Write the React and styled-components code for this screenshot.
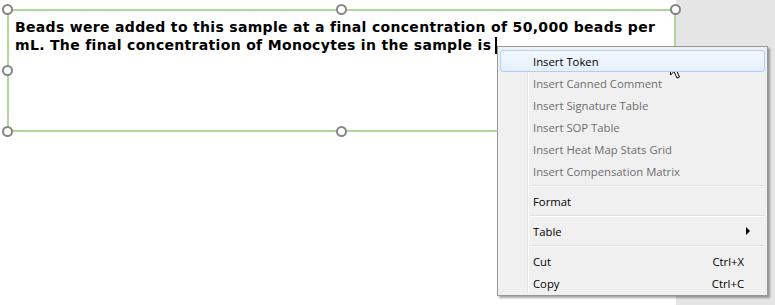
import React from "react";
import styled, { createGlobalStyle } from "styled-components";

const Global = createGlobalStyle`
  html, body {
    margin: 0;
    padding: 0;
    background: #ffffff;
  }
`;

const Page = styled.div`
  position: relative;
  display: flex;
  width: 775px;
  height: 305px;
  overflow: hidden;
`;

const Canvas = styled.div`
  flex: 0 0 673px;
  background: #ffffff;
  padding: 9px 0 0 7px;
  box-sizing: border-box;
`;

const SidePanel = styled.div`
  flex: 1;
  background: #e5e5e5;
`;

const TextBox = styled.div`
  position: relative;
  width: 669px;
  height: 123px;
  box-sizing: border-box;
  border: 2px solid #b0d69c;
  padding: 7px 6px 0 6px;
  font-family: "DejaVu Sans", Verdana, sans-serif;
  font-weight: bold;
  font-size: 14px;
  letter-spacing: 0.32px;
  line-height: 18px;
  color: #000;
`;

const Caret = styled.span`
  display: inline-block;
  width: 2px;
  height: 17px;
  background: #000;
  vertical-align: -4px;
  margin-left: 4px;
`;

// overlay that puts the resize handles on the frame's edges
const HandleFrame = styled.div`
  position: absolute;
  inset: -7px;
  display: flex;
  flex-direction: column;
  justify-content: space-between;
  pointer-events: none;
`;

const HandleRow = styled.div`
  display: flex;
  justify-content: space-between;
`;

const Handle = styled.span`
  width: 7px;
  height: 7px;
  border: 2px solid #858585;
  border-radius: 50%;
  background: #fff;
  visibility: ${(p) => (p.$hidden ? "hidden" : "visible")};
`;

const Menu = styled.div`
  position: absolute;
  left: 497px;
  top: 46px;
  width: 271px;
  box-sizing: border-box;
  background: #f0f0f0;
  border: 1px solid #979797;
  box-shadow: 2px 2px 2px rgba(0, 0, 0, 0.35);
  padding: 3px 2px 1px 2px;
  font-family: "Open Sans", "Noto Sans", sans-serif;
  font-size: 11.3px;
  &::before {
    content: "";
    position: absolute;
    left: 29px;
    top: 2px;
    bottom: 2px;
    width: 1px;
    background: #e2e3e3;
    border-right: 1px solid #ffffff;
  }
`;

const Item = styled.div`
  position: relative;
  display: flex;
  align-items: center;
  height: 22px;
  box-sizing: border-box;
  padding: 0 20px 0 32px;
  color: ${(p) => (p.$disabled ? "#6d6d6d" : "#000")};
  border: 1px solid ${(p) => (p.$hot ? "#a8d2f5" : "transparent")};
  border-radius: 3px;
  background: ${(p) =>
    p.$hot ? "linear-gradient(#f3f8fe, #e5eefa)" : "transparent"};
  z-index: 1;
`;

const Label = styled.span`
  flex: 1;
`;

const Shortcut = styled.span`
  color: #000;
`;

const Arrow = styled.span`
  width: 0;
  height: 0;
  border-top: 4px solid transparent;
  border-bottom: 4px solid transparent;
  border-left: 4px solid #000;
  margin-right: -6px;
`;

const Separator = styled.div`
  height: 8px;
  display: flex;
  align-items: center;
  padding-left: 30px;
  &::after {
    content: "";
    flex: 1;
    height: 1px;
    background: #e0e0e0;
    border-bottom: 1px solid #ffffff;
  }
`;

const Pointer = styled.svg`
  position: absolute;
  left: 669px;
  top: 58px;
`;

const items = [
  { label: "Insert Token", hot: true },
  { label: "Insert Canned Comment", disabled: true },
  { label: "Insert Signature Table", disabled: true },
  { label: "Insert SOP Table", disabled: true },
  { label: "Insert Heat Map Stats Grid", disabled: true },
  { label: "Insert Compensation Matrix", disabled: true },
  { sep: true },
  { label: "Format" },
  { sep: true },
  { label: "Table", sub: true },
  { sep: true },
  { label: "Cut", key: "Ctrl+X" },
  { label: "Copy", key: "Ctrl+C" },
];

export default function App() {
  return (
    <Page>
      <Global />
      <Canvas>
        <TextBox>
          Beads were added to this sample at a final concentration of 50,000
          beads per mL. The final concentration of Monocytes in the sample is
          <Caret />
          <HandleFrame>
            <HandleRow>
              <Handle />
              <Handle />
              <Handle />
            </HandleRow>
            <HandleRow>
              <Handle />
              <Handle $hidden />
            </HandleRow>
            <HandleRow>
              <Handle />
              <Handle />
              <Handle $hidden />
            </HandleRow>
          </HandleFrame>
        </TextBox>
      </Canvas>
      <SidePanel />
      <Menu>
        {items.map((it, i) =>
          it.sep ? (
            <Separator key={i} />
          ) : (
            <Item key={i} $hot={it.hot} $disabled={it.disabled}>
              <Label>{it.label}</Label>
              {it.key && <Shortcut>{it.key}</Shortcut>}
              {it.sub && <Arrow />}
            </Item>
          )
        )}
      </Menu>
      <Pointer width="14" height="22" viewBox="0 0 14 22">
        <path
          d="M1.5 1.5 L1.5 17 L5 13.5 L8 20 L10.5 19 L7.5 12.5 L12 12.5 Z"
          fill="#fff"
          stroke="#000"
          strokeWidth="1"
        />
      </Pointer>
    </Page>
  );
}
